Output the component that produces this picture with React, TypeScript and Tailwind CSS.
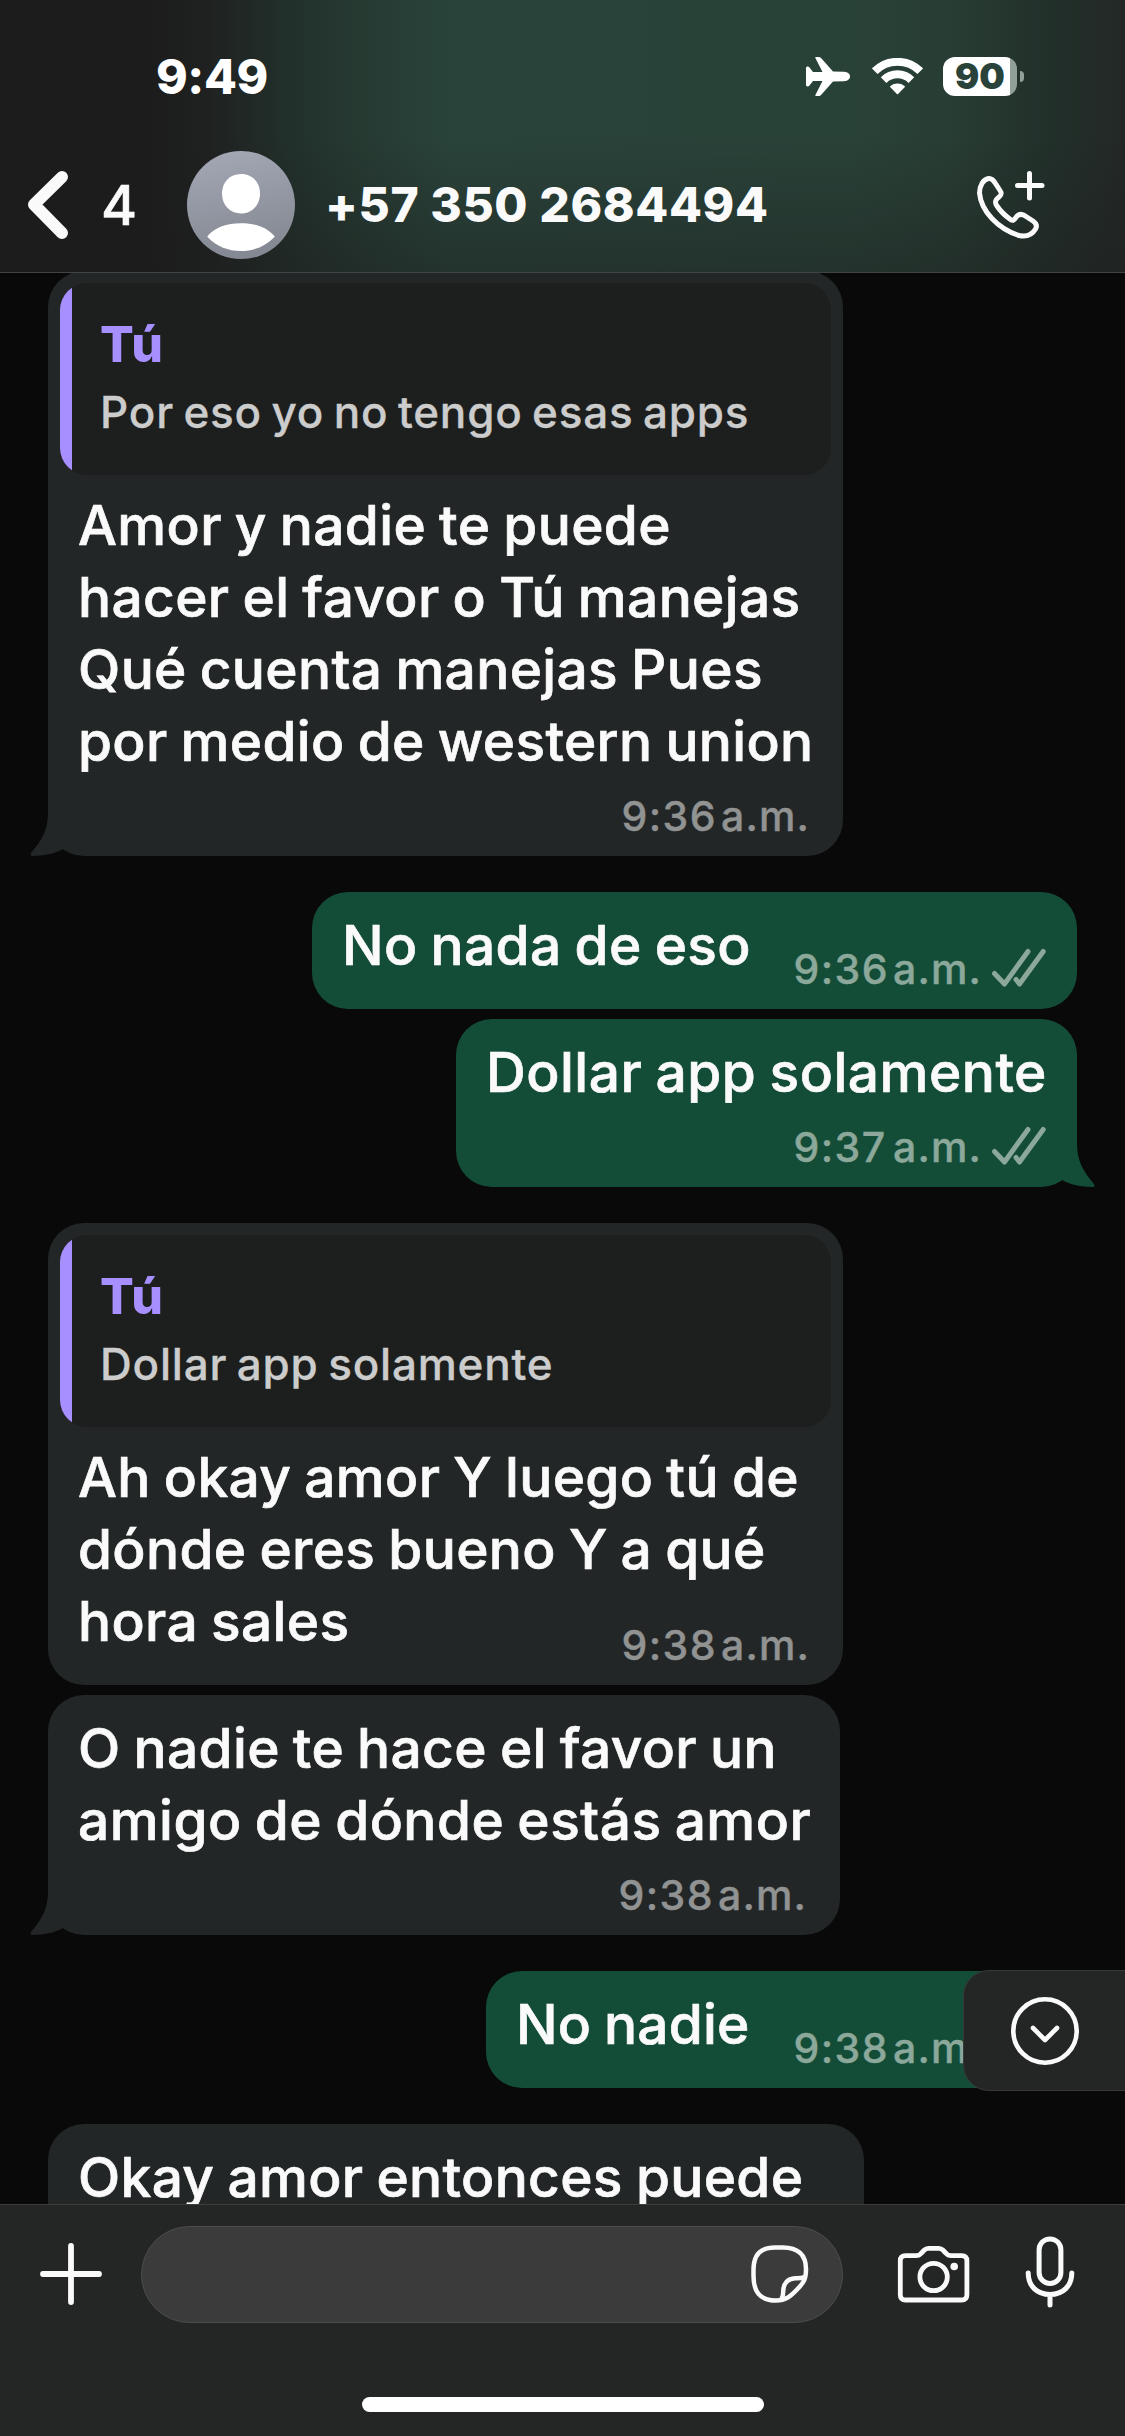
import React from "react";

type Tail = "left" | "right";

interface Line {
  text: string;
  tracking?: string;
}

interface Message {
  sent?: boolean;
  quote?: string;
  lines: Line[];
  time: string;
  width: string;
  spacing: string;
  timeOffset: string;
  tail?: Tail;
}

const inline = "-mt-[32px]";
const below = "mt-[19px]";

const messages: Message[] = [
  {
    quote: "Por eso yo no tengo esas apps",
    lines: [
      { text: "Amor y nadie te puede" },
      { text: "hacer el favor o Tú manejas" },
      { text: "Qué cuenta manejas Pues" },
      { text: "por medio de western union" },
    ],
    time: "9:36",
    width: "w-[795px]",
    spacing: "-mt-[2px]",
    timeOffset: below,
    tail: "left",
  },
  {
    sent: true,
    lines: [{ text: "No nada de eso" }],
    time: "9:36",
    width: "w-[765px]",
    spacing: "mt-[36px]",
    timeOffset: inline,
  },
  {
    sent: true,
    lines: [{ text: "Dollar app solamente", tracking: "tracking-[0.53px]" }],
    time: "9:37",
    width: "w-[621px]",
    spacing: "mt-[10px]",
    timeOffset: below,
    tail: "right",
  },
  {
    quote: "Dollar app solamente",
    lines: [
      { text: "Ah okay amor Y luego tú de" },
      { text: "dónde eres bueno Y a qué" },
      { text: "hora sales" },
    ],
    time: "9:38",
    width: "w-[795px]",
    spacing: "mt-[36px]",
    timeOffset: inline,
  },
  {
    lines: [
      { text: "O nadie te hace el favor un" },
      { text: "amigo de dónde estás amor", tracking: "tracking-[0.48px]" },
    ],
    time: "9:38",
    width: "w-[792px]",
    spacing: "mt-[10px]",
    timeOffset: below,
    tail: "left",
  },
  {
    sent: true,
    lines: [{ text: "No nadie", tracking: "tracking-[0.2px]" }],
    time: "9:38",
    width: "w-[591px]",
    spacing: "mt-[36px]",
    timeOffset: inline,
  },
  {
    lines: [{ text: "Okay amor entonces puede" }],
    time: "9:38",
    width: "w-[816px]",
    spacing: "mt-[36px]",
    timeOffset: below,
  },
];

function PlaneIcon() {
  return (
    <svg width="44" height="39" viewBox="0 0 44 39" fill="#fff">
      <path d="M0 11C0 9.3 2.4 9 3.5 10.5L7 15L16.5 15L9.5 1.2C9 .3 9.4 0 10.4 0H13C14 0 14.8.8 15.5 1.6L27 14.5L38 14.8C42 15 44 17.3 44 19.5S42 24 38 24.2L27 24.5L15.5 37.4C14.8 38.2 14 39 13 39H10.4C9.4 39 9 38.7 9.5 37.8L16.5 24L7 24L3.5 28.5C2.4 30 0 29.7 0 28Z" />
    </svg>
  );
}

function WifiIcon() {
  return (
    <svg width="51" height="38" viewBox="0 0 51 38" fill="none" stroke="#fff">
      <path d="M2.7 13.3A32.2 32.2 0 0 1 48.3 13.3" strokeWidth="8" />
      <path d="M11.6 22.1A19.7 19.7 0 0 1 39.4 22.1" strokeWidth="8" />
      <path d="M18.9 28.6A10.8 10.8 0 0 1 32.1 28.6L25.5 35.4Z" fill="#fff" strokeWidth="1.6" strokeLinejoin="round" />
    </svg>
  );
}

function Battery() {
  return (
    <div className="flex items-center">
      <div className="flex h-[39px] w-[74px] items-center justify-center rounded-[12px] bg-[linear-gradient(to_right,#fff_67px,#92a09a_67px)]">
        <span className="text-[36px] leading-[39px] font-black text-[#29433a]">90</span>
      </div>
      <div className="ml-[3px] h-[11px] w-[4px] rounded-r-full bg-[#92a09a]" />
    </div>
  );
}

function Avatar() {
  return (
    <svg width="108" height="108" viewBox="0 0 108 108">
      <defs>
        <linearGradient id="avatar" x1="0" y1="0" x2="0.2" y2="1">
          <stop offset="0" stopColor="#a5a9b6" />
          <stop offset="1" stopColor="#858993" />
        </linearGradient>
      </defs>
      <circle cx="54" cy="54" r="54" fill="url(#avatar)" />
      <path d="M54 23C65.500 23 73 31.500 73 42.500C73 54 65 62.500 54 62.500S35 54 35 42.500C35 31.500 42.500 23 54 23Z" fill="#fff" />
      <path d="M21 86.500C20.300 85.800 20.300 85.300 21 84.600C29 76 39 72.300 54 72.300S79 76 87 84.600C87.700 85.300 87.700 85.800 87 86.500C78 95.500 67 100 54 100S30 95.500 21 86.500Z" fill="#fff" />
    </svg>
  );
}

function PhonePlusIcon() {
  return (
    <svg width="72" height="72" viewBox="0 0 72 72" fill="none" stroke="#fafafa" strokeWidth="5" strokeLinecap="round" strokeLinejoin="round">
      <path d="M13.500 9.500C17 9 19 12 20.500 14.500L25 21.500C27 24.500 26.500 26 24 28C20 31 19.500 33.500 22 37C26 43 30.500 47 35.500 50.500C37.500 52 39 51.500 40.500 49C43 45 46 44.500 49.500 46.500L58 52C61.500 54.500 62.300 57 60.500 60C57 66 51 68 44 66.500C23 60 6 42 4.500 24C4.500 17 8 10.500 13.500 9.500Z" />
      <path d="M54.500 4.500V29M42.500 16.500H67" />
    </svg>
  );
}

function Header() {
  return (
    <header className="flex h-[273px] shrink-0 flex-col border-b border-[#404543] bg-[linear-gradient(to_bottom,transparent_50%,rgba(28,28,28,0.42)),linear-gradient(to_right,#1c1c1c_0px,#1c1c1c_150px,#1f2221_210px,#22302b_290px,#263a32_360px,#29433a_450px,#294238_850px,#283d34_950px,#22302a_1050px,#232826_1125px)] text-white">
      <div className="mt-[52px] flex h-[49px] items-center justify-between pr-[101px] pl-[156px]">
        <span className="text-[48px] leading-[48px] font-extrabold tracking-[-0.4px]">9:49</span>
        <div className="flex items-center">
          <PlaneIcon />
          <span className="mr-[20px] ml-[22px]">
            <WifiIcon />
          </span>
          <Battery />
        </div>
      </div>
      <div className="mt-[50px] flex h-[108px] items-center text-[#fafafa]">
        <svg className="ml-[26px]" width="44" height="72" viewBox="0 0 44 72" fill="none" stroke="#fafafa" strokeWidth="12" strokeLinecap="round" strokeLinejoin="round">
          <path d="M36 8L8 35.500L36 64" />
        </svg>
        <span className="ml-[31px] w-[86px] text-[55px] leading-[55px] font-medium [-webkit-text-stroke:0.5px_currentColor]">4</span>
        <Avatar />
        <span className="ml-[30px] text-[48px] leading-[48px] font-extrabold tracking-[0.6px]">+57 350 2684494</span>
        <div className="mr-[78px] ml-auto">
          <PhonePlusIcon />
        </div>
      </div>
    </header>
  );
}

function ReadChecks() {
  return (
    <svg className="ml-[7px] -translate-y-px" width="57" height="40" viewBox="0 0 57 40" fill="none" stroke="#8ba89b" strokeWidth="5" strokeLinecap="round" strokeLinejoin="round">
      <path d="M5.500 25.500L15.500 36L39 3.500" />
      <path d="M27 31.500L30.500 36L54.200 3.500" />
    </svg>
  );
}

function BubbleTail({ side }: { side: Tail }) {
  return (
    <svg
      className={side === "left" ? "absolute bottom-0 -left-[18px]" : "absolute -right-[18px] bottom-0 -scale-x-100"}
      width="42"
      height="44"
      viewBox="0 0 42 44"
      fill={side === "left" ? "#232627" : "#144d37"}
    >
      <path d="M18 0C18 18 12 28 1 41C0 42.800.5 44 2 44C14 44 24 42 32.500 37.300L42 0Z" />
    </svg>
  );
}

function Bubble({ message }: { message: Message }) {
  const { sent, quote, lines, time, width, spacing, timeOffset, tail } = message;
  return (
    <div
      className={`relative flex shrink-0 flex-col rounded-[36px] ${width} ${spacing} ${
        sent ? "mr-[48px] self-end bg-[#144d37]" : "ml-[48px] self-start bg-[#232627]"
      }`}
    >
      {tail && <BubbleTail side={tail} />}
      {quote && (
        <div className="mx-[12px] mt-[12px] flex h-[192px] overflow-hidden rounded-[27px] bg-[#1d1f1e]">
          <div className="w-[12px] bg-[#a78fff]" />
          <div className="pt-[31px] pl-[28px]">
            <p className="text-[50px] leading-[60px] font-extrabold tracking-[1.2px] text-[#a78fff]">Tú</p>
            <p className="mt-[8px] text-[44px] leading-[60px] font-medium tracking-[0.8px] text-[#cbcccb] [word-spacing:-3px] [-webkit-text-stroke:0.3px_currentColor]">
              {quote}
            </p>
          </div>
        </div>
      )}
      <div
        className={`relative pl-[30px] text-[55px] leading-[72px] font-medium whitespace-nowrap text-[#fafafa] [word-spacing:-2px] [-webkit-text-stroke:0.7px_currentColor] ${
          quote ? "pt-[14px]" : "pt-[17px]"
        }`}
      >
        {lines.map((line) => (
          <p key={line.text} className={line.tracking ?? "tracking-[0.36px]"}>
            {line.text}
          </p>
        ))}
      </div>
      <div
        className={`relative mb-[20px] flex h-[40px] self-end text-[41px] leading-[40px] font-medium [-webkit-text-stroke:0.4px_currentColor] ${timeOffset} ${
          sent ? "mr-[31px] text-[#8ba89b]" : "mr-[33px] text-[#919292]"
        }`}
      >
        <span className="w-[99.5px] tracking-[1.4px]">{time}</span>
        <span className="tracking-[1.1px]">a.m.</span>
        {sent && <ReadChecks />}
      </div>
    </div>
  );
}

function ScrollDown() {
  return (
    <button className="absolute top-[1697px] -right-px flex h-[121px] w-[163px] items-center rounded-l-[26px] border border-[#373938] bg-[#242625] pl-[44px]">
      <svg width="74" height="74" viewBox="0 0 74 74" fill="none" stroke="#fafafa" strokeWidth="4.600" strokeLinecap="round" strokeLinejoin="round">
        <circle cx="37" cy="37" r="31.700" />
        <path d="M25 34L37 46L49 34" />
      </svg>
    </button>
  );
}

function Composer() {
  return (
    <footer className="flex h-[232px] shrink-0 flex-col border-t border-[#3c3e3d] bg-[#242625]">
      <div className="mt-[21px] flex h-[97px] items-center">
        <svg className="ml-[39px] -translate-y-px" width="64" height="64" viewBox="0 0 64 64" fill="none" stroke="#fafafa" strokeWidth="5.800" strokeLinecap="round">
          <path d="M32 4V60M4 32H60" />
        </svg>
        <div className="ml-[38px] flex h-[97px] w-[702px] items-center justify-end rounded-full border border-[#4b4d4c] bg-[#3a3b3a] pr-[33px]">
          <svg className="-translate-y-px" width="58" height="58" viewBox="0 0 58 58" fill="none" stroke="#fafafa" strokeWidth="4.500" strokeLinecap="round" strokeLinejoin="round">
            <path d="M24 2.500H32C47 2.500 55 10 55 24C55 34 53 37 47 43.500C40 51 35 55.500 25 55.500C9 55.500 2.500 47 2.500 31V25C2.500 10 9 2.500 24 2.500Z" />
            <path d="M53.500 32C50.500 33.500 48 33.300 44 33.300C36.500 33.800 32.500 38.500 32.300 45.500C32.300 49 32 51.500 30.500 54" />
          </svg>
        </div>
        <svg className="ml-[53px] -translate-y-px" width="75" height="60" viewBox="0 0 75 60" fill="none" stroke="#fafafa" strokeWidth="4.800" strokeLinejoin="round">
          <path d="M9.500 11.700H20C22.500 11.700 24 10.800 25.500 9L28 6.300C29.500 4.800 30.500 4.300 32.500 4.300H42.700C44.700 4.300 45.700 4.800 47.200 6.300L49.700 9C51.200 10.800 52.700 11.700 55.200 11.700H65.700C69 11.700 70.900 13.600 70.900 16.900V50.800C70.900 54.100 69 56 65.700 56H9.500C6.200 56 4.300 54.100 4.300 50.800V16.900C4.300 13.600 6.200 11.700 9.500 11.700Z" />
          <circle cx="37.600" cy="33" r="13.700" />
          <circle cx="58.200" cy="22.500" r="3.800" fill="#fafafa" stroke="none" />
        </svg>
        <svg className="ml-[54px] -translate-y-[3px]" width="50" height="72" viewBox="0 0 50 72" fill="none" stroke="#fafafa" strokeWidth="5" strokeLinecap="round">
          <rect x="14.100" y="2.900" width="21.800" height="44.500" rx="10.900" />
          <path d="M3.200 37C3.200 50 12 58.500 25 58.500S46.800 50 46.800 37M25 58.500V69" />
        </svg>
      </div>
      <div className="mt-[74px] h-[15px] w-[402px] self-center rounded-full bg-white" />
    </footer>
  );
}

export default function App() {
  return (
    <div className="flex h-[2436px] w-[1125px] flex-col overflow-hidden bg-[#090909] font-['Inter',sans-serif]">
      <Header />
      <main className="relative flex min-h-0 flex-1 flex-col overflow-hidden">
        {messages.map((message, index) => (
          <Bubble key={index} message={message} />
        ))}
        <ScrollDown />
      </main>
      <Composer />
    </div>
  );
}
